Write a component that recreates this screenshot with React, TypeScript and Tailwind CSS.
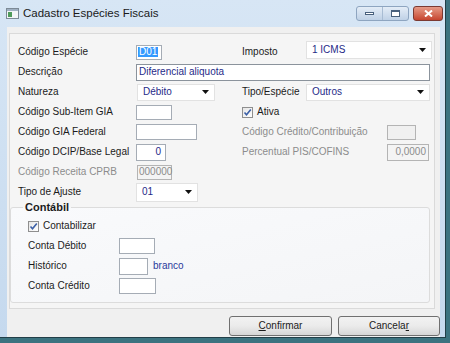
import React from "react";

// Small down arrow used by the combo boxes
function Arrow() {
  return (
    <svg width="7" height="4" viewBox="0 0 7 4" className="shrink-0">
      <path d="M0 0h7L3.5 4z" fill="#111" />
    </svg>
  );
}

// XP style checkbox, always checked here
function Check({ label }: { label: string }) {
  return (
    <div className="flex items-center gap-[4px]">
      <div className="w-[11px] h-[11px] border border-[#8f8f8f] bg-gradient-to-br from-[#e6e6e6] to-[#ffffff] flex items-center justify-center">
        <svg width="9" height="9" viewBox="0 0 9 9">
          <path d="M1.5 4.5l2 2.2L7.8 1.6" stroke="#3b5fa6" strokeWidth="1.6" fill="none" />
        </svg>
      </div>
      <span>{label}</span>
    </div>
  );
}

function Select({ value, className }: { value: string; className: string }) {
  return (
    <div
      className={`bg-white border border-[#e2e2e2] flex items-center justify-between pl-[5px] pr-[5px] text-[#1f2a88] ${className}`}
    >
      <span>{value}</span>
      <Arrow />
    </div>
  );
}

export default function App() {
  const label = "w-[118px] shrink-0";
  const input = "bg-white border border-[#a5acb5] h-[15px]";

  return (
    <div className="w-[450px] h-[343px] bg-[#3c7380] font-['Liberation_Sans',sans-serif] text-[10px] text-[#1b1b1b] leading-none">
      <div className="w-[446px] h-[338px] flex flex-col bg-gradient-to-b from-[#d7e6f5] to-[#c5d9ee] border-r border-b border-[#223f48]">
        {/* Title bar */}
        <div className="h-[27px] shrink-0 flex items-center pl-[6px] pr-[2px]">
          <svg width="13" height="11" viewBox="0 0 13 11" className="mr-[4px]">
            <rect x="0.5" y="0.5" width="12" height="10" fill="#f3f5f7" stroke="#7d8a96" />
            <rect x="1" y="1" width="11" height="2" fill="#9fb0c2" />
            <rect x="2" y="4" width="4" height="5" fill="#4f9a5a" />
          </svg>
          <span className="text-[11.5px] text-[#1a1a1a]">Cadastro Espécies Fiscais</span>
          <div className="ml-auto flex items-start self-start mt-[6px]">
            <div className="w-[53px] h-[15px] flex rounded-[3px] border border-[#8ea5c0] bg-gradient-to-b from-[#e4edf7] to-[#bfd1e6]">
              <div className="w-[26px] flex items-center justify-center border-r border-[#a8bcd3]">
                <div className="w-[9px] h-[3px] bg-white border border-[#48607c]" />
              </div>
              <div className="flex-1 flex items-center justify-center">
                <div className="w-[9px] h-[7px] border border-[#48607c] border-t-2 bg-white" />
              </div>
            </div>
            <div className="w-[30px] h-[15px] ml-[4px] rounded-[3px] border border-[#7b3a32] bg-gradient-to-b from-[#e59a86] to-[#c5442f] flex items-center justify-center">
              <svg width="9" height="7" viewBox="0 0 9 7">
                <path d="M1 0.5l7 6M8 0.5l-7 6" stroke="#fff" strokeWidth="2" />
              </svg>
            </div>
          </div>
        </div>

        {/* Client area */}
        <div className="flex-1 ml-[7px] mr-[5px] bg-[#f0f0f0] pt-[6px] pl-[2px] flex flex-col">
          <div className="w-[426px] h-[276px] border border-[#dadada] bg-[#f5f5f5] pt-[8px] pl-[8px]">
            {/* Row: Código Espécie / Imposto */}
            <div className="h-[20px] flex items-center">
              <div className="w-[224px] flex items-center">
                <span className={label}>Código Espécie</span>
                <div className="w-[26px] h-[15px] bg-white border border-[#a5acb5] flex items-center pl-[1px]">
                  <span className="bg-[#3399ff] text-white px-[1px]">D01</span>
                </div>
              </div>
              <span className="w-[64px]">Imposto</span>
              <Select value="1 ICMS" className="w-[126px] h-[18px] -mt-[5px]" />
            </div>
            {/* Row: Descrição */}
            <div className="h-[20px] flex items-center">
              <span className={label}>Descrição</span>
              <div className="w-[294px] h-[17px] bg-white border border-[#8b939c] flex items-center pl-[2px] text-[#1f2a88]">
                Diferencial aliquota
              </div>
            </div>
            {/* Row: Natureza / Tipo */}
            <div className="h-[20px] flex items-center">
              <div className="w-[224px] flex items-center">
                <span className={label}>Natureza</span>
                <Select value="Débito" className="w-[78px] h-[17px] ml-[1px]" />
              </div>
              <span className="w-[64px]">Tipo/Espécie</span>
              <Select value="Outros" className="w-[124px] h-[17px]" />
            </div>
            {/* Row: Sub-Item / Ativa */}
            <div className="h-[20px] flex items-center">
              <div className="w-[224px] flex items-center">
                <span className={label}>Código Sub-Item GIA</span>
                <div className={`${input} w-[36px]`} />
              </div>
              <Check label="Ativa" />
            </div>
            {/* Row: GIA Federal / Crédito */}
            <div className="h-[20px] flex items-center">
              <div className="w-[224px] flex items-center">
                <span className={label}>Código GIA Federal</span>
                <div className={`${input} w-[61px] h-[16px]`} />
              </div>
              <span className="w-[145px] text-[#8c8c8c]">Código Crédito/Contribuição</span>
              <div className="w-[29px] h-[15px] bg-[#f0f0f0] border border-[#b4b4b4]" />
            </div>
            {/* Row: DCIP / PIS */}
            <div className="h-[20px] flex items-center">
              <div className="w-[224px] flex items-center">
                <span className={label}>Código DCIP/Base Legal</span>
                <div className="w-[30px] h-[17px] bg-white border border-[#a5acb5] flex items-center justify-end pr-[4px] text-[#1f2a88]">
                  0
                </div>
              </div>
              <span className="w-[145px] text-[#8c8c8c]">Percentual PIS/COFINS</span>
              <div className="w-[42px] h-[17px] bg-[#f4f4f4] border border-[#b4b4b4] flex items-center justify-end pr-[2px] text-[#8c8c8c]">
                0,0000
              </div>
            </div>
            {/* Row: CPRB */}
            <div className="h-[20px] flex items-center">
              <span className={`${label} text-[#8c8c8c]`}>Código Receita CPRB</span>
              <div className="w-[35px] h-[15px] bg-[#f4f4f4] border border-[#b4b4b4] flex items-center pl-[1px] text-[#8c8c8c] ml-[1px]">
                000000
              </div>
            </div>
            {/* Row: Tipo de Ajuste */}
            <div className="h-[20px] flex items-center">
              <span className={label}>Tipo de Ajuste</span>
              <Select value="01" className="w-[62px] h-[19px]" />
            </div>

            {/* Contábil group */}
            <fieldset className="w-[420px] h-[101px] -ml-[8px] border border-[#dcdcdc] rounded-[3px] bg-gradient-to-br from-[#f9fafc] to-[#f4f5f7]">
              <legend className="ml-[12px] px-[2px] font-bold text-[11px]">Contábil</legend>
              <div className="pl-[17px]">
                <div className="h-[20px] flex items-center mt-[3px]">
                  <Check label="Contabilizar" />
                </div>
                <div className="h-[20px] flex items-center">
                  <span className="w-[91px]">Conta Débito</span>
                  <div className={`${input} w-[36px] h-[16px]`} />
                </div>
                <div className="h-[20px] flex items-center">
                  <span className="w-[91px]">Histórico</span>
                  <div className={`${input} w-[29px] h-[17px]`} />
                  <span className="ml-[5px] text-[#2a3a9c]">branco</span>
                </div>
                <div className="h-[20px] flex items-center">
                  <span className="w-[91px]">Conta Crédito</span>
                  <div className={`${input} w-[37px] h-[16px]`} />
                </div>
              </div>
            </fieldset>
          </div>

          {/* Buttons */}
          <div className="flex justify-end gap-[6px] mt-[7px]">
            <button className="w-[103px] h-[20px] rounded-[3px] border border-[#707070] bg-gradient-to-b from-[#f2f2f2] via-[#ebebeb] to-[#d6d6d6] text-[10px] text-[#1b1b1b]">
              <span className="underline">C</span>onfirmar
            </button>
            <button className="w-[102px] h-[20px] rounded-[3px] border border-[#707070] bg-gradient-to-b from-[#f2f2f2] via-[#ebebeb] to-[#d6d6d6] text-[10px] text-[#1b1b1b]">
              Cancela<span className="underline">r</span>
            </button>
          </div>
        </div>
      </div>
    </div>
  );
}
